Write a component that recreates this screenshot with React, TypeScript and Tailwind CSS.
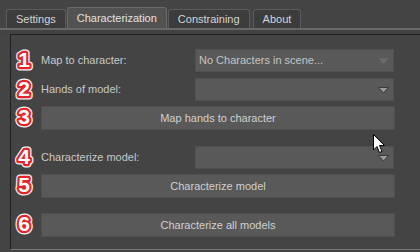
const font = { fontFamily: '"Liberation Sans", Arial, sans-serif' };

function Num({ n }: { n: string }) {
  return (
    <svg width="27" height="24" viewBox="0 0 27 24" className="shrink-0 overflow-visible -mt-[4px]">
      <text x="13" y="20" textAnchor="middle" fontSize="21" fontWeight="bold" fontFamily='"Liberation Sans", Arial, sans-serif' fill="none" stroke="#f4f4f4" strokeWidth="7" strokeLinejoin="round">{n}</text>
      <text x="13" y="20" textAnchor="middle" fontSize="21" fontWeight="bold" fontFamily='"Liberation Sans", Arial, sans-serif' fill="none" stroke="#e3242b" strokeWidth="4.5" strokeLinejoin="round">{n}</text>
      <text x="13" y="20" textAnchor="middle" fontSize="21" fontWeight="bold" fontFamily='"Liberation Sans", Arial, sans-serif' fill="#ffffff">{n}</text>
    </svg>
  );
}

function Arrow({ disabled }: { disabled?: boolean }) {
  return (
    <svg width="11" height="7" viewBox="0 0 11 7" className="absolute right-[4px] top-[8px]">
      <polygon points="0.5,0.5 10.5,0.5 5.5,6" fill={disabled ? "#6c6c6c" : "#9a9a9a"} stroke={disabled ? "#626262" : "#3a3a3a"} strokeWidth="1" />
    </svg>
  );
}

function Combo({ text, disabled }: { text?: string; disabled?: boolean }) {
  return (
    <div className="relative w-[199px] h-[23px] bg-[#595959] border border-[#505050] flex items-center pl-[3px] text-[11px] text-[#c4c4c4]">
      {text}
      <Arrow disabled={disabled} />
    </div>
  );
}

function Btn({ label }: { label: string }) {
  return (
    <button className="w-[354px] h-[24px] bg-[#595959] border border-[#4f4f4f] text-[11px] text-[#d0d0d0] flex items-center justify-center">
      {label}
    </button>
  );
}

function Tab({ label, active }: { label: string; active?: boolean }) {
  return active ? (
    <div className="h-[21px] px-[9px] bg-[#525252] border border-b-0 border-[#6a6a6a] rounded-t-[3px] flex items-center text-[11px] text-[#e2e2e2]">
      {label}
    </div>
  ) : (
    <div className="h-[19px] px-[9px] bg-[#3c3c3c] border border-b-0 border-[#5c5c5c] rounded-t-[3px] flex items-center text-[11px] text-[#d4d4d4]">
      {label}
    </div>
  );
}

function Row({ n, h, children }: { n: string; h: string; children: React.ReactNode }) {
  return (
    <div className={`flex items-center ${h}`}>
      <Num n={n} />
      <div className="ml-[3px] flex items-center">{children}</div>
    </div>
  );
}

export default function App() {
  return (
    <div className="relative w-[420px] h-[252px] bg-[#444444] overflow-hidden" style={font}>
      <div className="flex items-end h-[28px] pl-[6px] gap-[1px]">
        <Tab label="Settings" />
        <Tab label="Characterization" active />
        <Tab label="Constraining" />
        <div className="w-[1px]" />
        <Tab label="About" />
      </div>
      <div className="h-[2px] bg-[#686868]" />
      <div className="h-[4px] bg-[#424242]" />
      <div className="ml-[10px] h-[216px] border-l border-t border-[#202020] border-b border-b-[#777777] pt-[14px] flex flex-col">
        <Row n="1" h="h-[23px]">
          <span className="w-[154px] text-[11px] text-[#c8c8c8]">Map to character:</span>
          <Combo text="No Characters in scene..." disabled />
        </Row>
        <div className="mt-[6px]">
          <Row n="2" h="h-[23px]">
            <span className="w-[154px] text-[11px] text-[#c8c8c8]">Hands of model:</span>
            <Combo />
          </Row>
        </div>
        <div className="mt-[5px]">
          <Row n="3" h="h-[24px]">
            <Btn label="Map hands to character" />
          </Row>
        </div>
        <div className="mt-[16px]">
          <Row n="4" h="h-[23px]">
            <span className="w-[154px] text-[11px] text-[#c8c8c8]">Characterize model:</span>
            <Combo />
          </Row>
        </div>
        <div className="mt-[5px]">
          <Row n="5" h="h-[24px]">
            <Btn label="Characterize model" />
          </Row>
        </div>
        <div className="mt-[15px]">
          <Row n="6" h="h-[24px]">
            <Btn label="Characterize all models" />
          </Row>
        </div>
      </div>
      <svg width="14" height="21" viewBox="0 0 14 21" className="absolute left-[373px] top-[134px]">
        <polygon points="0.5,0.5 0.5,16 4,12.5 6.5,18.5 9,17.5 6.5,11.5 11.5,11.5" fill="#ffffff" stroke="#000000" strokeWidth="1" strokeLinejoin="miter" />
      </svg>
    </div>
  );
}
